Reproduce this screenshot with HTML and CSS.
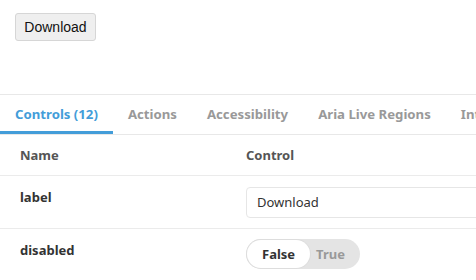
FILE: index.html
```html
<!DOCTYPE html>
<html>
<head>
<meta charset="utf-8">
<link rel="stylesheet" href="styles.css">
</head>
<body>
<div class="preview">
  <button class="demo-btn">Download</button>
</div>
<div class="panel">
  <div class="tabs">
    <div class="tab active">Controls (12)</div>
    <div class="tab">Actions</div>
    <div class="tab">Accessibility</div>
    <div class="tab">Aria Live Regions</div>
    <div class="tab">Interactions</div>
  </div>
  <div class="table">
    <div class="row head">
      <div class="c-name">Name</div>
      <div class="c-ctrl">Control</div>
    </div>
    <div class="row">
      <div class="c-name strong">label</div>
      <div class="c-ctrl"><div class="input">Download</div></div>
    </div>
    <div class="row">
      <div class="c-name strong">disabled</div>
      <div class="c-ctrl">
        <div class="toggle"><span class="opt on">False</span><span class="opt">True</span></div>
      </div>
    </div>
  </div>
</div>
</body>
</html>
```
FILE: styles.css
```css
* { box-sizing: border-box; }
html, body { margin: 0; padding: 0; background: #fff; overflow: hidden; }
body { width: 476px; height: 280px; font-family: "Noto Sans", "Open Sans", sans-serif; }
.preview { height: 94px; padding: 13px 15px 0; }
.demo-btn {
  font-family: "Liberation Sans", Arial, sans-serif;
  font-size: 14px;
  color: #111;
  background: #efefef;
  border: 1px solid #d6d6d6;
  border-radius: 3px;
  height: 28px;
  width: 81px;
  padding: 0;
  margin: 0;
}
.panel { border-top: 1px solid #e8e8e8; }
.tabs {
  display: flex;
  height: 40px;
  border-bottom: 1px solid #e8e8e8;
  white-space: nowrap;
}
.tab {
  padding: 0 15px;
  font-size: 13.2px;
  font-weight: 700;
  color: #999;
  line-height: 39px;
  flex: none;
}
.tab.active {
  color: #439dd9;
  box-shadow: inset 0 -3px 0 #439dd9;
}
.row {
  display: flex;
  border-bottom: 1px solid #ebebeb;
}
.row.head { height: 41px; align-items: center; }
.row.head div { font-size: 13px; font-weight: 700; color: #555; }
.c-name { width: 246px; padding-left: 20px; flex: none; }
.c-ctrl { flex: 1; }
.strong { font-size: 13px; font-weight: 700; color: #333; }
.row:nth-child(2) { height: 53px; padding-top: 11px; }
.row:nth-child(2) .c-name { line-height: 20px; }
.input {
  height: 31px;
  width: 240px;
  border: 1px solid #e6e6e6;
  border-radius: 4px;
  padding: 0 10px;
  font-size: 13px;
  color: #333;
  line-height: 29px;
}
.row:nth-child(3) { border-bottom: none; padding-top: 10px; }
.row:nth-child(3) .c-name { line-height: 22px; }
.toggle {
  display: inline-flex;
  height: 30px;
  background: #e4e4e4;
  border-radius: 15px;
  padding: 1px;
}
.opt {
  font-size: 13px;
  font-weight: 700;
  color: #999;
  line-height: 28px;
  padding: 0 14px 0 6px;
}
.opt.on {
  background: #fff;
  color: #333;
  border-radius: 14px;
  padding: 0 15px;
  box-shadow: 0 0 0 1px #ddd;
}
```
